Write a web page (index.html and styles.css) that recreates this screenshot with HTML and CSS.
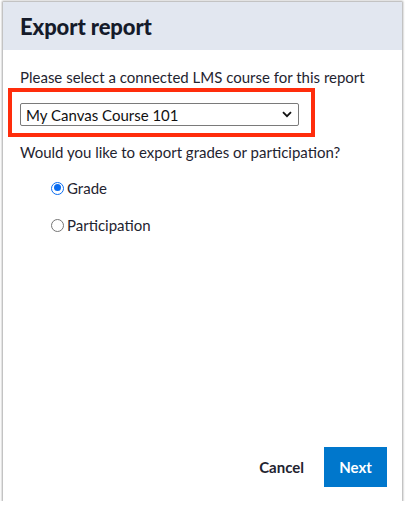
FILE: index.html
```html
<!DOCTYPE html>
<html>
<head>
<meta charset="utf-8">
<link rel="stylesheet" href="styles.css">
</head>
<body>
<div class="dialog">
  <div class="header"><h1 class="title">Export report</h1></div>
  <div class="body">
    <p class="label">Please select a connected LMS course for this report</p>
    <div class="highlight">
      <div class="select">
        <span>My Canvas Course 101</span>
        <svg class="chev" width="10" height="7" viewBox="0 0 10 7"><path d="M1 1.2 L5 5.2 L9 1.2" fill="none" stroke="#111" stroke-width="1.8"/></svg>
      </div>
    </div>
    <p class="label q">Would you like to export grades or participation?</p>
    <div class="options">
      <label class="opt"><span class="radio checked"></span>Grade</label>
      <label class="opt"><span class="radio"></span>Participation</label>
    </div>
  </div>
  <div class="footer">
    <button class="btn cancel">Cancel</button>
    <button class="btn next">Next</button>
  </div>
</div>
</body>
</html>
```
FILE: styles.css
```css
html, body { margin: 0; padding: 0; background: #fff; }
body { font-family: Lato, "Noto Sans", sans-serif; color: #1f2430; }
.dialog {
  margin: 2px 3px 0 3px;
  width: 399px;
  height: 499px;
  box-sizing: border-box;
  background: #fff;
  box-shadow: 0 0 2px 1px rgba(0,0,0,0.35);
  display: flex;
  flex-direction: column;
}
.header {
  background: #e2e7f0;
  height: 48px;
  padding: 0 17px;
  display: flex;
  align-items: center;
}
.title { margin: 0; font-size: 22px; font-weight: 900; color: #151b2a; letter-spacing: -0.1px; }
.body { flex: 1; padding: 17px 17px 0 17px; }
.label { margin: 0; font-size: 15px; line-height: 20px; color: #1f2430; }
.highlight {
  margin: 1px 0 0 -12px;
  width: 307px;
  height: 49px;
  box-sizing: border-box;
  border: 4px solid #ff2d0c;
  padding: 11px 0 0 8px;
}
.select {
  width: 279px;
  height: 23px;
  box-sizing: border-box;
  border: 1px solid #7a7a7a;
  border-radius: 2px;
  display: flex;
  align-items: center;
  justify-content: space-between;
  padding: 0 5px 0 5px;
  font-size: 15px;
  color: #111;
}
.chev { margin-right: 1px; }
.q { margin-top: 5px; }
.options { padding: 16px 0 0 31px; display: flex; flex-direction: column; gap: 17px; }
.opt { display: flex; align-items: center; font-size: 15px; line-height: 20px; color: #1f2430; }
.radio {
  width: 13px; height: 13px; box-sizing: border-box;
  border: 1px solid #767676; border-radius: 50%;
  margin-right: 3px; position: relative;
}
.radio.checked { border: 1.5px solid #0a6cf0; }
.radio.checked::after {
  content: ""; position: absolute; left: 1.5px; top: 1.5px;
  width: 7px; height: 7px; border-radius: 50%; background: #0a6cf0;
}
.footer { display: flex; justify-content: flex-end; align-items: center; padding: 0 15px 14px 0; gap: 20px; }
.btn { border: 0; font-family: inherit; font-size: 15px; font-weight: 700; cursor: pointer; }
.cancel { background: none; color: #1f2430; padding: 0; }
.next { background: #0077cc; color: #fff; width: 63px; height: 40px; }
```
